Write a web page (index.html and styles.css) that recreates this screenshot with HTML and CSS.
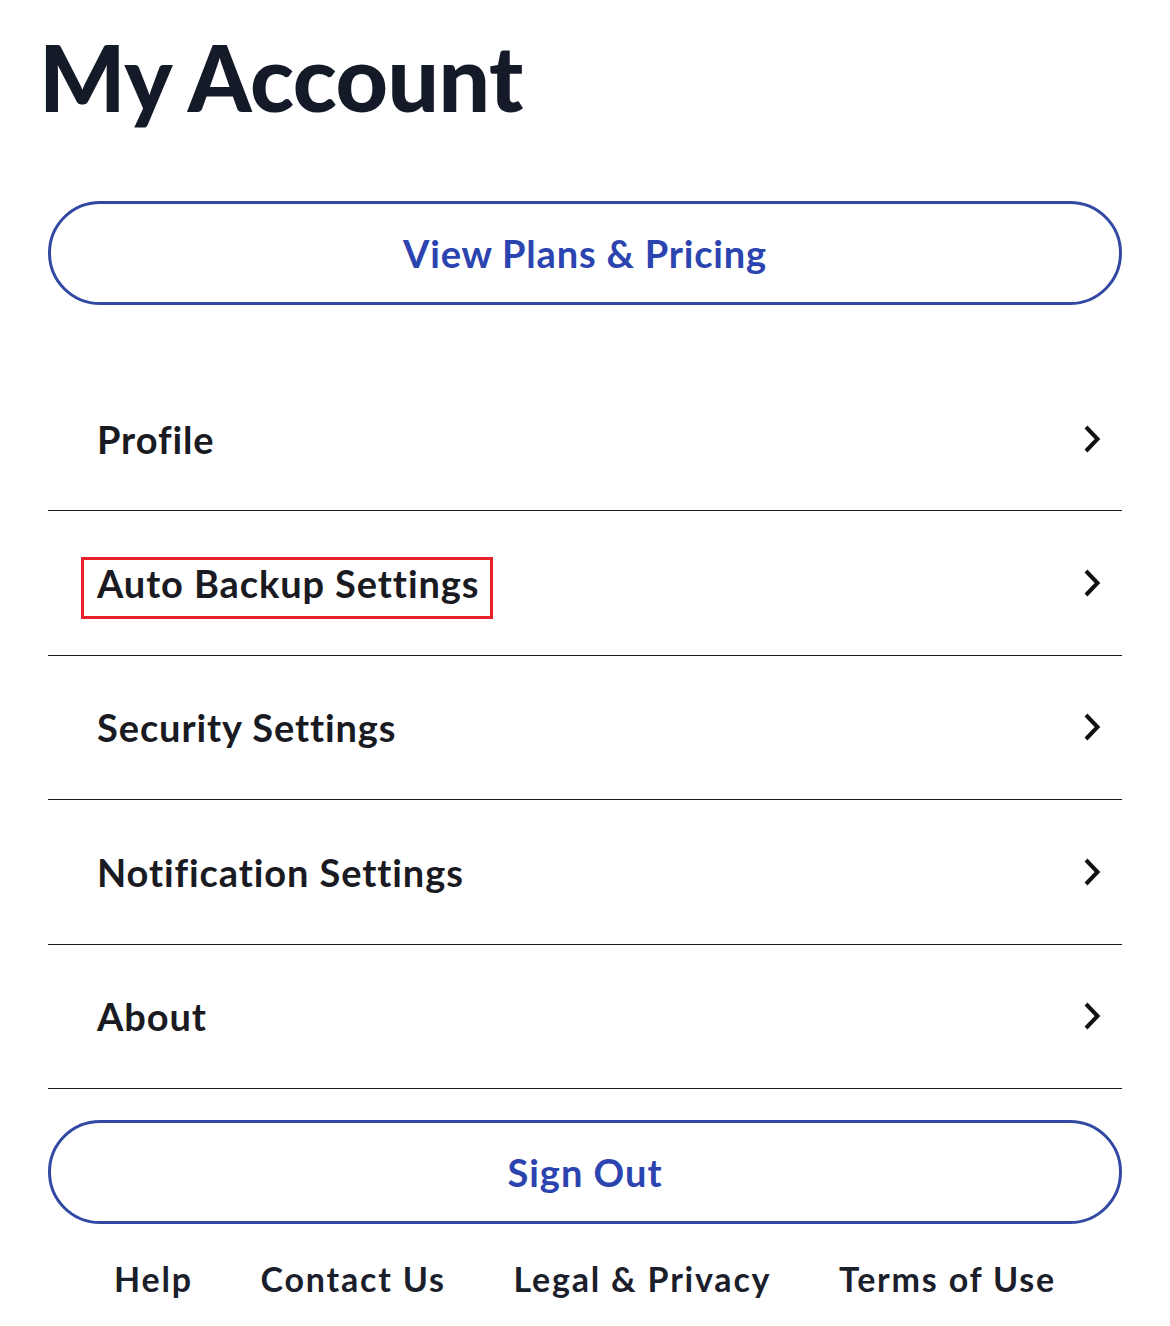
FILE: index.html
```html
<!DOCTYPE html>
<html lang="en">
<head>
<meta charset="utf-8">
<title>My Account</title>
<link rel="stylesheet" href="styles.css">
</head>
<body>
<main class="page">
  <h1 class="title">My Account</h1>
  <a class="pill pill-plans" href="#">View Plans &amp; Pricing</a>
  <ul class="menu">
    <li class="row"><span class="label">Profile</span><svg class="chev" viewBox="0 0 20 30" aria-hidden="true"><path d="M4 3 L15.5 15 L4 27" fill="none" stroke="#111" stroke-width="4"/></svg></li>
    <li class="row"><span class="label highlight">Auto Backup Settings</span><svg class="chev" viewBox="0 0 20 30" aria-hidden="true"><path d="M4 3 L15.5 15 L4 27" fill="none" stroke="#111" stroke-width="4"/></svg></li>
    <li class="row"><span class="label">Security Settings</span><svg class="chev" viewBox="0 0 20 30" aria-hidden="true"><path d="M4 3 L15.5 15 L4 27" fill="none" stroke="#111" stroke-width="4"/></svg></li>
    <li class="row"><span class="label">Notification Settings</span><svg class="chev" viewBox="0 0 20 30" aria-hidden="true"><path d="M4 3 L15.5 15 L4 27" fill="none" stroke="#111" stroke-width="4"/></svg></li>
    <li class="row"><span class="label">About</span><svg class="chev" viewBox="0 0 20 30" aria-hidden="true"><path d="M4 3 L15.5 15 L4 27" fill="none" stroke="#111" stroke-width="4"/></svg></li>
  </ul>
  <a class="pill pill-signout" href="#">Sign Out</a>
  <nav class="footer">
    <a href="#">Help</a>
    <a href="#">Contact Us</a>
    <a href="#">Legal &amp; Privacy</a>
    <a href="#">Terms of Use</a>
  </nav>
</main>
</body>
</html>
```

FILE: styles.css
```css
* { box-sizing: border-box; }
html, body { margin: 0; padding: 0; background: #fff; }
body { font-family: "Lato", "Liberation Sans", sans-serif; color: #1a1b22; }
.page { padding: 0 48px; display: flex; flex-direction: column; }
.title {
  margin: 22px 0 0 -9px;
  font-size: 91px;
  font-weight: 900;
  line-height: 110px;
  color: #141a28;
  letter-spacing: -0.5px;
}
.pill {
  display: flex;
  align-items: center;
  justify-content: center;
  height: 104px;
  border: 3px solid #3249a3;
  border-radius: 52px;
  color: #2c44b0;
  font-size: 38px;
  font-weight: 700;
  text-decoration: none;
}
.pill-plans { margin-top: 69px; letter-spacing: 0.8px; }
.menu { list-style: none; margin: 63px 0 0; padding: 0; }
.row {
  display: flex;
  align-items: center;
  justify-content: space-between;
  height: 144.5px;
  padding: 0 20px 0 49px;
  border-bottom: 1px solid #1a1a1a;
}
.row:first-child { height: 143px; }
.label {
  font-size: 38px;
  font-weight: 700;
  color: #1a1b22;
  letter-spacing: 0.9px;
  position: relative;
}
.highlight::after {
  content: "";
  position: absolute;
  left: -16px; right: -14px; top: -3px; bottom: -13px;
  border: 3px solid #e8202a;
}
.chev { width: 20px; height: 30px; display: block; }
.pill-signout { margin-top: 31px; letter-spacing: 1px; }
.footer {
  display: flex;
  justify-content: space-between;
  padding: 0 66px 0 66px;
  margin-top: 34px;
}
.footer a {
  color: #1b1e2b;
  text-decoration: none;
  font-size: 34px;
  font-weight: 700;
  letter-spacing: 1.8px;
}
```
